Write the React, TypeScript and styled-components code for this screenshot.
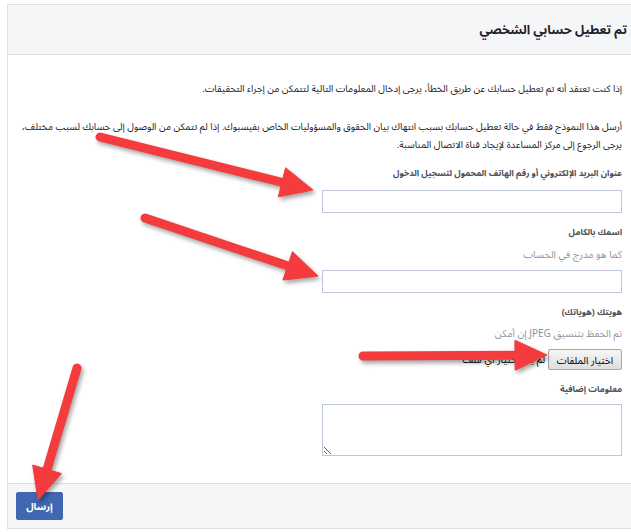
import React from 'react'
import styled, { createGlobalStyle } from 'styled-components'

const GlobalStyle = createGlobalStyle`
  html, body {
    margin: 0;
    padding: 0;
    background: #fff;
    overflow: hidden;
  }
  body {
    font-family: 'Noto Sans Arabic', 'Noto Naskh Arabic', 'Noto Sans', 'DejaVu Sans', sans-serif;
    color: #1d2129;
  }
`

const Page = styled.div`
  position: relative;
  width: 631px;
  height: 532px;
  overflow: hidden;
`

const Panel = styled.div`
  direction: rtl;
  width: 628px;
  margin: 4px 0 0 7px;
  border: 1px solid #dddfe2;
  background: #fff;
`

const Header = styled.div`
  height: 49px;
  display: flex;
  align-items: center;
  padding: 0 9px;
  background: #f5f6f7;
  border-bottom: 1px solid #dddfe2;
`

const Title = styled.h2`
  margin: 0;
  font-size: 12.5px;
  font-weight: bold;
  color: #1d2129;
`

const Body = styled.div`
  padding: 25px 14px 27px 6px;
  font-size: 9.6px;
  line-height: 18px;
`

const Para = styled.p<{ $gap?: number }>`
  margin: 0 0 ${(p) => p.$gap ?? 0}px;
  color: #1d2129;
`

const Line = styled.span`
  white-space: nowrap;
`

const Field = styled.div`
  margin-top: 10px;
`

const Label = styled.div<{ $gap: number }>`
  font-size: 8.6px;
  font-weight: 700;
  color: #4b4f56;
  margin-bottom: ${(p) => p.$gap}px;
`

const Helper = styled.div`
  color: #90949c;
  font-size: 10px;
  margin-bottom: 6px;
`

const TextInput = styled.input`
  display: block;
  box-sizing: border-box;
  width: 300px;
  height: 23px;
  border: 1px solid #bdc7d8;
  padding: 3px;
  font: inherit;
  outline: none;
`

const TextArea = styled.textarea`
  display: block;
  box-sizing: border-box;
  width: 300px;
  height: 52px;
  border: 1px solid #bdc7d8;
  padding: 3px;
  font: inherit;
  outline: none;
`

const FileRow = styled.div`
  display: flex;
  align-items: center;
  gap: 3px;
  white-space: nowrap;
`

const FileButton = styled.button`
  box-sizing: border-box;
  height: 21px;
  width: 74px;
  padding: 0 4px;
  font-family: inherit;
  font-size: 10px;
  white-space: nowrap;
  color: #000;
  background: linear-gradient(#f6f6f6, #dedede);
  border: 1px solid #a6a6a6;
  border-radius: 2px;
`

const FileStatus = styled.span`
  font-size: 10px;
  color: #000;
`

const Footer = styled.div`
  display: flex;
  padding: 8px;
  background: #f5f6f7;
  border-top: 1px solid #dddfe2;
  direction: ltr;
`

const SubmitButton = styled.button`
  box-sizing: border-box;
  height: 28px;
  width: 47px;
  padding: 0;
  font-family: inherit;
  font-size: 10px;
  font-weight: bold;
  color: #fff;
  background: #4267b2;
  border: 1px solid #4267b2;
  border-radius: 2px;
`

const Overlay = styled.svg`
  position: absolute;
  left: 0;
  top: 0;
  pointer-events: none;
  filter: drop-shadow(2px 3px 2px rgba(0, 0, 0, 0.35));
`

type ArrowSpec = { x1: number; y1: number; x2: number; y2: number }

const arrows: ArrowSpec[] = [
  { x1: 100, y1: 137, x2: 313, y2: 190 },
  { x1: 145, y1: 218, x2: 318, y2: 276 },
  { x1: 363, y1: 356, x2: 547, y2: 355 },
  { x1: 77, y1: 368, x2: 38, y2: 500 },
]

const Arrow: React.FC<ArrowSpec> = ({ x1, y1, x2, y2 }) => {
  const len = Math.hypot(x2 - x1, y2 - y1)
  const ux = (x2 - x1) / len
  const uy = (y2 - y1) / len
  const head = 32
  const half = 15
  const bx = x2 - ux * head
  const by = y2 - uy * head
  const pts = [
    [bx - uy * half, by + ux * half],
    [x2, y2],
    [bx + uy * half, by - ux * half],
  ]
    .map((p) => p.join(','))
    .join(' ')
  return (
    <g fill='#f43b3d' stroke='#f43b3d'>
      <line x1={x1} y1={y1} x2={bx + ux * 3} y2={by + uy * 3} strokeWidth={9} strokeLinecap='round' />
      <polygon points={pts} strokeWidth={1} strokeLinejoin='round' />
    </g>
  )
}

const App: React.FC = () => {
  return (
    <Page>
      <GlobalStyle />
      <Panel>
        <Header>
          <Title>تم تعطيل حسابي الشخصي</Title>
        </Header>
        <Body>
          <Para $gap={20}>
            إذا كنت تعتقد أنه تم تعطيل حسابك عن طريق الخطأ، يرجى إدخال المعلومات التالية لتتمكن من إجراء التحقيقات.
          </Para>
          <Para>
            <Line>
              أرسل هذا النموذج فقط في حالة تعطيل حسابك بسبب انتهاك بيان الحقوق والمسؤوليات الخاص بفيسبوك. إذا لم تتمكن من الوصول إلى حسابك لسبب مختلف،
            </Line>
            <br />
            يرجى الرجوع إلى مركز المساعدة لإيجاد قناة الاتصال المناسبة.
          </Para>
          <Field>
            <Label $gap={8}>عنوان البريد الإلكتروني أو رقم الهاتف المحمول لتسجيل الدخول</Label>
            <TextInput type='text' />
          </Field>
          <Field>
            <Label $gap={5}>اسمك بالكامل</Label>
            <Helper>كما هو مدرج في الحساب</Helper>
            <TextInput type='text' />
          </Field>
          <Field>
            <Label $gap={4}>هويتك (هوياتك)</Label>
            <Helper>تم الحفظ بتنسيق JPEG إن أمكن</Helper>
            <FileRow>
              <FileButton type='button'>اختيار الملفات</FileButton>
              <FileStatus>لم يتم اختيار أي ملف</FileStatus>
            </FileRow>
          </Field>
          <Field>
            <Label $gap={6}>معلومات إضافية</Label>
            <TextArea />
          </Field>
        </Body>
        <Footer>
          <SubmitButton type='button'>إرسال</SubmitButton>
        </Footer>
      </Panel>
      <Overlay width={631} height={532}>
        {arrows.map((a, i) => (
          <Arrow key={i} {...a} />
        ))}
      </Overlay>
    </Page>
  )
}

export default App
